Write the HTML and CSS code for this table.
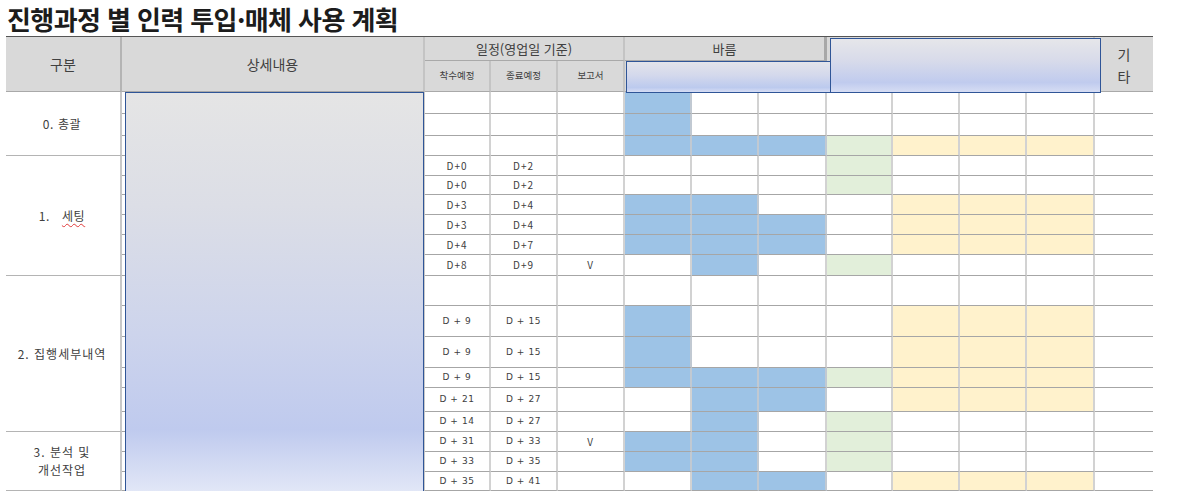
FILE: index.html
```html
<!DOCTYPE html>
<html lang="ko">
<head>
<meta charset="utf-8">
<title>진행과정 별 인력 투입·매체 사용 계획</title>
<link rel="stylesheet" href="styles.css">
</head>
<body>
<h1 class="title">진행과정 별 인력 투입·매체 사용 계획</h1>
<div class="sheet">
  <!-- header row 1 -->
  <div class="c h rs2 gubun-h">구분</div>
  <div class="c h rs2 big">상세내용</div>
  <div class="c h cs3 mid">일정(영업일 기준)</div>
  <div class="c h cs3 mid bar">바름</div>
  <div class="c h cs4 rs2"></div>
  <div class="c h rs2 x etc"><span>기</span><span>타</span></div>
  <!-- header row 2 -->
  <div class="c h sm">착수예정</div>
  <div class="c h sm">종료예정</div>
  <div class="c h sm">보고서</div>
  <div class="c h cs3"></div>

  <!-- r0 -->
  <div class="c g rs3"><span>0. 총괄</span></div>
  <div class="c d"></div><div class="c"></div><div class="c"></div><div class="c"></div>
  <div class="c b"></div><div class="c"></div><div class="c"></div><div class="c"></div><div class="c"></div><div class="c"></div><div class="c"></div><div class="c x"></div>
  <!-- r1 -->
  <div class="c d"></div><div class="c"></div><div class="c"></div><div class="c"></div>
  <div class="c b"></div><div class="c"></div><div class="c"></div><div class="c"></div><div class="c"></div><div class="c"></div><div class="c"></div><div class="c x"></div>
  <!-- r2 -->
  <div class="c d"></div><div class="c"></div><div class="c"></div><div class="c"></div>
  <div class="c b"></div><div class="c b"></div><div class="c b"></div><div class="c gr"></div><div class="c y"></div><div class="c y"></div><div class="c y"></div><div class="c x"></div>

  <!-- r3 -->
  <div class="c g rs6"><span>1.&nbsp;&nbsp; <span class="typo">세팅</span></span></div>
  <div class="c d"></div><div class="c n">D+0</div><div class="c n">D+2</div><div class="c"></div>
  <div class="c"></div><div class="c"></div><div class="c"></div><div class="c gr"></div><div class="c"></div><div class="c"></div><div class="c"></div><div class="c x"></div>
  <!-- r4 -->
  <div class="c d"></div><div class="c n">D+0</div><div class="c n">D+2</div><div class="c"></div>
  <div class="c"></div><div class="c"></div><div class="c"></div><div class="c gr"></div><div class="c"></div><div class="c"></div><div class="c"></div><div class="c x"></div>
  <!-- r5 -->
  <div class="c d"></div><div class="c n">D+3</div><div class="c n">D+4</div><div class="c"></div>
  <div class="c b"></div><div class="c b"></div><div class="c"></div><div class="c"></div><div class="c y"></div><div class="c y"></div><div class="c y"></div><div class="c x"></div>
  <!-- r6 -->
  <div class="c d"></div><div class="c n">D+3</div><div class="c n">D+4</div><div class="c"></div>
  <div class="c b"></div><div class="c b"></div><div class="c b"></div><div class="c"></div><div class="c y"></div><div class="c y"></div><div class="c y"></div><div class="c x"></div>
  <!-- r7 -->
  <div class="c d"></div><div class="c n">D+4</div><div class="c n">D+7</div><div class="c"></div>
  <div class="c b"></div><div class="c b"></div><div class="c b"></div><div class="c"></div><div class="c y"></div><div class="c y"></div><div class="c y"></div><div class="c x"></div>
  <!-- r8 -->
  <div class="c d"></div><div class="c n">D+8</div><div class="c n">D+9</div><div class="c n">V</div>
  <div class="c"></div><div class="c b"></div><div class="c"></div><div class="c gr"></div><div class="c"></div><div class="c"></div><div class="c"></div><div class="c x"></div>

  <!-- r9 -->
  <div class="c g rs6 wide"><span>2. 집행세부내역</span></div>
  <div class="c d"></div><div class="c"></div><div class="c"></div><div class="c"></div>
  <div class="c"></div><div class="c"></div><div class="c"></div><div class="c"></div><div class="c"></div><div class="c"></div><div class="c"></div><div class="c x"></div>
  <!-- r10 -->
  <div class="c d"></div><div class="c v">D + 9</div><div class="c v">D + 15</div><div class="c"></div>
  <div class="c b"></div><div class="c"></div><div class="c"></div><div class="c"></div><div class="c y"></div><div class="c y"></div><div class="c y"></div><div class="c x"></div>
  <!-- r11 -->
  <div class="c d"></div><div class="c v">D + 9</div><div class="c v">D + 15</div><div class="c"></div>
  <div class="c b"></div><div class="c"></div><div class="c"></div><div class="c"></div><div class="c y"></div><div class="c y"></div><div class="c y"></div><div class="c x"></div>
  <!-- r12 -->
  <div class="c d"></div><div class="c v">D + 9</div><div class="c v">D + 15</div><div class="c"></div>
  <div class="c b"></div><div class="c b"></div><div class="c b"></div><div class="c gr"></div><div class="c y"></div><div class="c y"></div><div class="c y"></div><div class="c x"></div>
  <!-- r13 -->
  <div class="c d"></div><div class="c v">D + 21</div><div class="c v">D + 27</div><div class="c"></div>
  <div class="c"></div><div class="c b"></div><div class="c b"></div><div class="c"></div><div class="c y"></div><div class="c y"></div><div class="c y"></div><div class="c x"></div>
  <!-- r14 -->
  <div class="c d"></div><div class="c v">D + 14</div><div class="c v">D + 27</div><div class="c"></div>
  <div class="c"></div><div class="c b"></div><div class="c"></div><div class="c gr"></div><div class="c"></div><div class="c"></div><div class="c"></div><div class="c x"></div>

  <!-- r15 -->
  <div class="c g rs3 wide two"><span>3. 분석 및<br>개선작업</span></div>
  <div class="c d"></div><div class="c v">D + 31</div><div class="c v">D + 33</div><div class="c n">V</div>
  <div class="c b"></div><div class="c b"></div><div class="c"></div><div class="c gr"></div><div class="c"></div><div class="c"></div><div class="c"></div><div class="c x"></div>
  <!-- r16 -->
  <div class="c d"></div><div class="c v">D + 33</div><div class="c v">D + 35</div><div class="c"></div>
  <div class="c b"></div><div class="c b"></div><div class="c"></div><div class="c gr"></div><div class="c"></div><div class="c"></div><div class="c"></div><div class="c x"></div>
  <!-- r17 -->
  <div class="c d"></div><div class="c v">D + 35</div><div class="c v">D + 41</div><div class="c"></div>
  <div class="c"></div><div class="c b"></div><div class="c b"></div><div class="c"></div><div class="c y"></div><div class="c y"></div><div class="c y"></div><div class="c x"></div>

  <!-- overlay shapes -->
  <div class="shape shape-detail"></div>
  <div class="shape shape-sub"></div>
  <div class="shape shape-top"></div>
</div>
</body>
</html>
```
FILE: styles.css
```css
html, body {
  margin: 0;
  padding: 0;
  background: #ffffff;
}
body {
  padding-left: 6px;
  font-family: "Noto Sans CJK KR", "Noto Sans", sans-serif;
  color: #404040;
}
.title {
  margin: 0;
  height: 36px;
  padding-left: 1px;
  font-size: 26px;
  line-height: 38px;
  font-weight: 700;
  letter-spacing: -0.6px;
  color: #1c1c1c;
}
.sheet {
  position: relative;
  width: 1147px;
  border-top: 1px solid #555555;
  display: grid;
  grid-template-columns: 116px 303px 66px 67px 67px 67px 67px 68px 66px 67px 67px 68px 58px;
  grid-template-rows: 24px 31px 22px 22px 20px 20px 19px 20px 20px 20px 21px 30px 31px 31px 20px 24px 20px 20px 20px 19px;
}
.c {
  box-sizing: border-box;
  border-right: 2px solid #d2d2d2;
  border-bottom: 1px solid #a6a6a6;
  display: flex;
  align-items: center;
  justify-content: center;
  font-size: 9.5px;
  line-height: 1;
  white-space: nowrap;
  background: #ffffff;
}
.rs2 { grid-row: span 2; }
.rs3 { grid-row: span 3; }
.rs6 { grid-row: span 6; }
.cs3 { grid-column: span 3; }
.cs4 { grid-column: span 4; }

.h {
  background: #d9d9d9;
  border-right-color: #c4c4c4;
  border-bottom-color: #a9a9a9;
}
.big { font-size: 14px; }
.gubun-h { font-size: 14px; border-right-color: #b4b4b4; }
.mid { font-size: 13px; }
.sm { font-size: 9.5px; }
.bar { border-right: 3px solid #a8a8a8; }
.etc {
  flex-direction: column;
  font-size: 14px;
  line-height: 22px;
  padding-top: 2px;
}
.x { border-right: none; }

.g {
  font-size: 12px;
  letter-spacing: 0.6px;
  border-right-color: #c8c8c8;
  border-bottom-color: #b4b4b4;
  padding-right: 2px;
}
.g.wide { letter-spacing: 1px; }
.g.two { text-align: center; line-height: 18px; white-space: normal; }
.typo {
  text-decoration: underline wavy #e03a3a;
  text-decoration-thickness: 1px;
  text-underline-offset: 2px;
}
.d { border-right-color: #c8c8c8; }
.n { font-size: 10px; letter-spacing: 1px; }
.v {
  font-family: "DejaVu Sans", "Noto Sans", sans-serif;
  font-size: 9px;
  letter-spacing: 0.6px;
}
.b { background: #9dc3e6; border-right-color: #c1c9d2; }
.gr { background: #e2efda; }
.y { background: #fff2cc; }

.shape {
  position: absolute;
  box-sizing: border-box;
  border: 1px solid #2f5597;
}
.shape-detail {
  left: 119px;
  top: 55px;
  width: 299px;
  height: 403px;
  background: linear-gradient(to bottom, #e5e5e5 0%, #dcdee6 28%, #cdd4ec 60%, #bfcaee 84%, #e3e8f7 100%);
}
.shape-sub {
  left: 620px;
  top: 24px;
  width: 205px;
  height: 32px;
  background: linear-gradient(to bottom, #e3e4ea 0%, #d3d8ec 45%, #bccaee 85%, #d6ddf4 100%);
}
.shape-top {
  left: 824px;
  top: 1px;
  width: 271px;
  height: 55px;
  background: linear-gradient(to bottom, #e6e6ea 0%, #d8dbea 40%, #c0cbee 82%, #d6ddf4 100%);
}
```
